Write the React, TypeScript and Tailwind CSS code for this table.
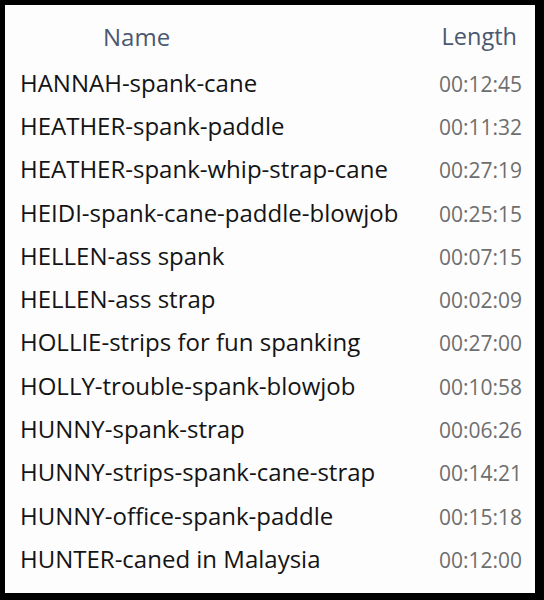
import React from 'react';

const rows: [string, string][] = [
  ['HANNAH-spank-cane', '00:12:45'],
  ['HEATHER-spank-paddle', '00:11:32'],
  ['HEATHER-spank-whip-strap-cane', '00:27:19'],
  ['HEIDI-spank-cane-paddle-blowjob', '00:25:15'],
  ['HELLEN-ass spank', '00:07:15'],
  ['HELLEN-ass strap', '00:02:09'],
  ['HOLLIE-strips for fun spanking', '00:27:00'],
  ['HOLLY-trouble-spank-blowjob', '00:10:58'],
  ['HUNNY-spank-strap', '00:06:26'],
  ['HUNNY-strips-spank-cane-strap', '00:14:21'],
  ['HUNNY-office-spank-paddle', '00:15:18'],
  ['HUNTER-caned in Malaysia', '00:12:00'],
];

export default function App() {
  return (
    <div className="w-[544px] h-[600px] bg-black pt-[5px] pl-[5px] pr-[9px] pb-[7px]">
      <div
        className="h-full bg-[#fdfdfd] pl-[15px] pr-[13px] leading-none"
        style={{ fontFamily: '"Open Sans", "Noto Sans", sans-serif' }}
      >
        <div className="h-[56px] pt-[7px] flex items-center justify-between text-[24px] text-[#4a5870]">
          <span className="ml-[83px]">Name</span>
          <span className="mr-[5px] text-[23.5px]">Length</span>
        </div>
        {rows.map(([name, len]) => (
          <div key={name} className="h-[43.3px] flex items-center justify-between">
            <span className="text-[24px] text-[#141414]">{name}</span>
            <span className="text-[21px] text-[#6e6e6e] pt-[3px]">{len}</span>
          </div>
        ))}
      </div>
    </div>
  );
}
